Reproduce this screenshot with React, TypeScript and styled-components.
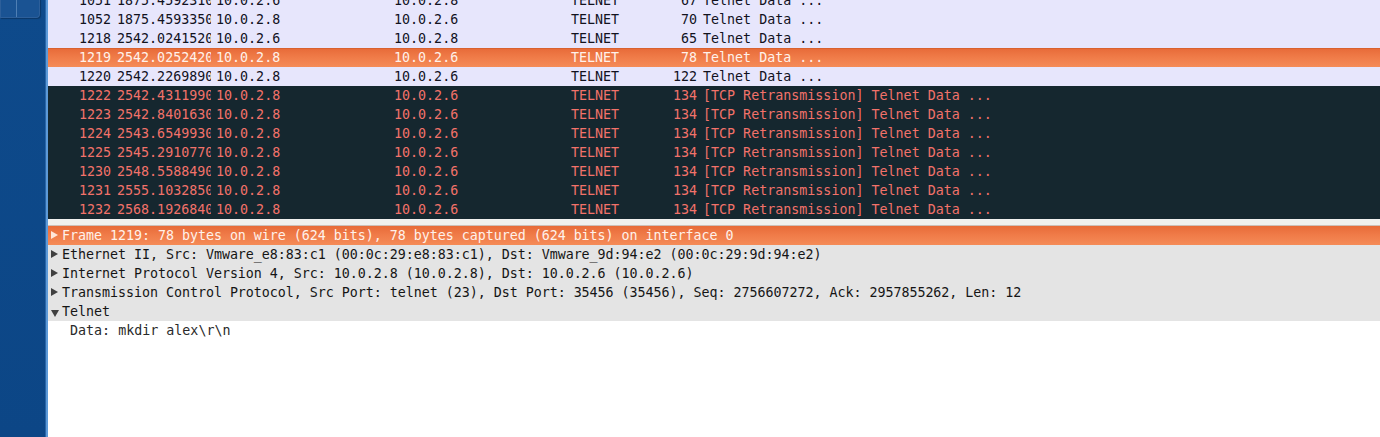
import React from "react";
import styled, { createGlobalStyle, css } from "styled-components";

const Global = createGlobalStyle`
  html, body { margin: 0; padding: 0; background: #ffffff; }
  body { width: 1380px; height: 437px; overflow: hidden; }
`;

const Page = styled.div`
  display: flex;
  width: 1380px;
  height: 437px;
  overflow: hidden;
  font-family: "DejaVu Sans Mono", "Liberation Mono", monospace;
  font-size: 13.33px;
`;

const Sidebar = styled.div`
  flex: 0 0 46px;
  background: linear-gradient(180deg, #0e4a8b 0%, #0c4686 100%);
  border-right: 2px solid #5d9ad8;
  box-shadow: inset -1px 0 0 #2a66a8;
  display: flex;
  flex-direction: column;
`;

const WindowTab = styled.div`
  margin-top: -6px;
  width: 40px;
  height: 24px;
  box-sizing: border-box;
  background: #1a5393;
  border: 1px solid #2d5f9a;
  border-top: none;
  border-radius: 0 0 4px 0;
  box-shadow: 1px 1px 1px rgba(0, 0, 0, 0.25);
  display: flex;
`;

const TabDivider = styled.div`
  margin-left: 15px;
  width: 1px;
  height: 100%;
  background: #4f7fb4;
`;

const Main = styled.div`
  flex: 1;
  display: flex;
  flex-direction: column;
  min-width: 0;
  background: #ffffff;
`;

const PacketList = styled.div`
  height: 219px;
  overflow: hidden;
  display: flex;
  flex-direction: column;
  flex-shrink: 0;
`;

const RowsTrack = styled.div`
  margin-top: -9px;
  display: flex;
  flex-direction: column;
`;

type Kind = "normal" | "selected" | "bad";

const PacketRow = styled.div<{ $kind: Kind }>`
  display: flex;
  height: 19px;
  line-height: 19px;
  white-space: pre;
  ${(p) =>
    p.$kind === "normal" &&
    css`
      background: #e7e6fc;
      color: #12121e;
    `}
  ${(p) =>
    p.$kind === "selected" &&
    css`
      background: linear-gradient(180deg, #e76a38 0%, #ef7a47 45%, #f58b57 100%);
      box-shadow: inset 0 1px 0 #d9612f;
      color: #fff1ea;
    `}
  ${(p) =>
    p.$kind === "bad" &&
    css`
      background: #15272f;
      color: #f2726a;
    `}
`;

const Cell = styled.div<{ $w?: number; $right?: boolean; $trim?: number }>`
  ${(p) => (p.$w ? `flex: 0 0 ${p.$w - (p.$trim ?? 0)}px;` : "flex: 1;")}
  margin-right: ${(p) => p.$trim ?? 0}px;
  box-sizing: border-box;
  overflow: hidden;
  padding: ${(p) => (p.$right ? "0 3px 0 0" : "0 0 0 3px")};
  text-align: ${(p) => (p.$right ? "right" : "left")};
`;

const Splitter = styled.div`
  height: 6px;
  flex-shrink: 0;
  background: #f0f0ef;
  border-bottom: 1px solid #cdbfb8;
`;

const Details = styled.div`
  display: flex;
  flex-direction: column;
`;

const TreeRow = styled.div<{ $selected?: boolean }>`
  display: flex;
  align-items: center;
  height: 19px;
  line-height: 19px;
  white-space: pre;
  padding-left: 2px;
  letter-spacing: -0.03px;
  background: ${(p) =>
    p.$selected
      ? "linear-gradient(180deg, #e86b39 0%, #f07c49 50%, #f58b57 100%)"
      : "#e4e4e4"};
  color: ${(p) => (p.$selected ? "#fff1ea" : "#151515")};
`;

const Arrow = styled.span<{ $open?: boolean; $light?: boolean }>`
  display: inline-block;
  width: 12px;
  flex: 0 0 12px;
  position: relative;
  height: 19px;
  &::before {
    content: "";
    position: absolute;
    left: 1px;
    top: ${(p) => (p.$open ? "8px" : "5px")};
    border-style: solid;
    ${(p) =>
      p.$open
        ? css`
            border-width: 7px 4px 0 4px;
            border-color: #404040 transparent transparent transparent;
          `
        : css`
            border-width: 4px 0 4px 7px;
            border-color: transparent transparent transparent
              ${p.$light ? "#ffe6da" : "#404040"};
          `}
  }
`;

const LeafRow = styled.div`
  height: 19px;
  line-height: 19px;
  padding-left: 22px;
  white-space: pre;
  color: #2a2a2a;
  background: #ffffff;
`;

type Packet = {
  no: number;
  time: string;
  src: string;
  dst: string;
  len: number;
  info: string;
  kind: Kind;
};

const packets: Packet[] = [
  { no: 1051, time: "1875.459231000", src: "10.0.2.6", dst: "10.0.2.8", len: 67, info: "Telnet Data ...", kind: "normal" },
  { no: 1052, time: "1875.459335000", src: "10.0.2.8", dst: "10.0.2.6", len: 70, info: "Telnet Data ...", kind: "normal" },
  { no: 1218, time: "2542.024152000", src: "10.0.2.6", dst: "10.0.2.8", len: 65, info: "Telnet Data ...", kind: "normal" },
  { no: 1219, time: "2542.025242000", src: "10.0.2.8", dst: "10.0.2.6", len: 78, info: "Telnet Data ...", kind: "selected" },
  { no: 1220, time: "2542.226989000", src: "10.0.2.8", dst: "10.0.2.6", len: 122, info: "Telnet Data ...", kind: "normal" },
  { no: 1222, time: "2542.431199000", src: "10.0.2.8", dst: "10.0.2.6", len: 134, info: "[TCP Retransmission] Telnet Data ...", kind: "bad" },
  { no: 1223, time: "2542.840163000", src: "10.0.2.8", dst: "10.0.2.6", len: 134, info: "[TCP Retransmission] Telnet Data ...", kind: "bad" },
  { no: 1224, time: "2543.654993000", src: "10.0.2.8", dst: "10.0.2.6", len: 134, info: "[TCP Retransmission] Telnet Data ...", kind: "bad" },
  { no: 1225, time: "2545.291077000", src: "10.0.2.8", dst: "10.0.2.6", len: 134, info: "[TCP Retransmission] Telnet Data ...", kind: "bad" },
  { no: 1230, time: "2548.558849000", src: "10.0.2.8", dst: "10.0.2.6", len: 134, info: "[TCP Retransmission] Telnet Data ...", kind: "bad" },
  { no: 1231, time: "2555.103285000", src: "10.0.2.8", dst: "10.0.2.6", len: 134, info: "[TCP Retransmission] Telnet Data ...", kind: "bad" },
  { no: 1232, time: "2568.192684000", src: "10.0.2.8", dst: "10.0.2.6", len: 134, info: "[TCP Retransmission] Telnet Data ...", kind: "bad" },
];

const tree = [
  { text: "Frame 1219: 78 bytes on wire (624 bits), 78 bytes captured (624 bits) on interface 0", selected: true },
  { text: "Ethernet II, Src: Vmware_e8:83:c1 (00:0c:29:e8:83:c1), Dst: Vmware_9d:94:e2 (00:0c:29:9d:94:e2)" },
  { text: "Internet Protocol Version 4, Src: 10.0.2.8 (10.0.2.8), Dst: 10.0.2.6 (10.0.2.6)" },
  { text: "Transmission Control Protocol, Src Port: telnet (23), Dst Port: 35456 (35456), Seq: 2756607272, Ack: 2957855262, Len: 12" },
];

export default function App() {
  return (
    <>
      <Global />
      <Page>
        <Sidebar>
          <WindowTab>
            <TabDivider />
          </WindowTab>
        </Sidebar>
        <Main>
          <PacketList>
            <RowsTrack>
              {packets.map((p) => (
                <PacketRow key={p.no} $kind={p.kind}>
                  <Cell $w={66} $right>{p.no}</Cell>
                  <Cell $w={99} $trim={2}>{p.time}</Cell>
                  <Cell $w={178}>{p.src}</Cell>
                  <Cell $w={177}>{p.dst}</Cell>
                  <Cell $w={72}>TELNET</Cell>
                  <Cell $w={60} $right>{p.len}</Cell>
                  <Cell>{p.info}</Cell>
                </PacketRow>
              ))}
            </RowsTrack>
          </PacketList>
          <Splitter />
          <Details>
            {tree.map((t) => (
              <TreeRow key={t.text} $selected={t.selected}>
                <Arrow $light={t.selected} />
                {t.text}
              </TreeRow>
            ))}
            <TreeRow>
              <Arrow $open />
              Telnet
            </TreeRow>
            <LeafRow>Data: mkdir alex\r\n</LeafRow>
          </Details>
        </Main>
      </Page>
    </>
  );
}
